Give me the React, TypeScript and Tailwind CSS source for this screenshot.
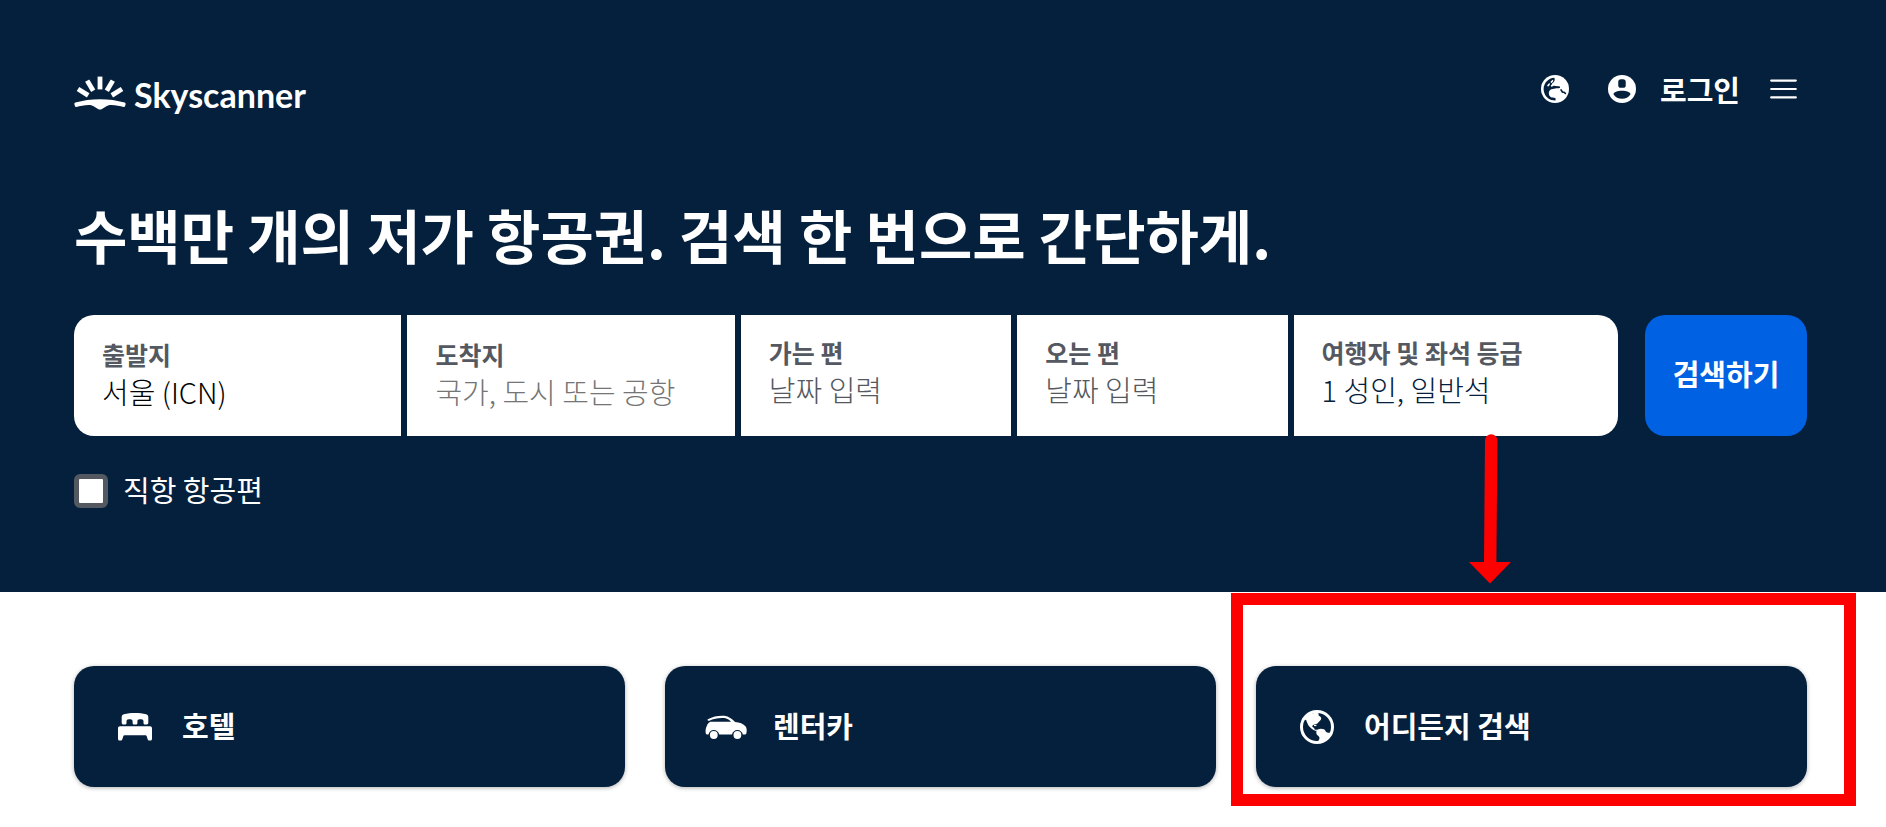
import React, { useState } from "react";

const NAVY = "#05203c";

function LogoMark() {
  return (
    <svg viewBox="0 0 52 34" className="h-[34px] w-[52px]" fill="none" aria-hidden="true">
      <g stroke="#fff" strokeWidth="4.8" strokeLinecap="butt" strokeLinejoin="round">
        <path d="M26 .6V13.4" />
        <path d="M13.2 4.6 19.2 14.8" />
        <path d="M38.8 4.6 32.8 14.8" />
        <path d="M4 13 14.2 19.4" />
        <path d="M48 13 37.8 19.4" />
      </g>
      <path
        fill="#fff"
        d="M1.4 26.6C9 24.400 17 23.200 26 23.200s17 1.200 24.600 3.400c.8.2 1.200 1 1 1.700l-.5 1.800c-.2.700-.8 1-1.500.8-3.600-1-7.600-1.800-12.400-2-2.400 0-3.800.6-5.600 1.800l-3.600 2.200c-1.300.800-2.700.800-4 0l-3.600-2.200c-1.800-1.200-3.200-1.800-5.600-1.800-4.800.2-8.800 1-12.400 2-.7.2-1.300-.1-1.500-.8l-.5-1.800c-.2-.7.2-1.500 1-1.700Z"
      />
    </svg>
  );
}

function GlobeEast() {
  return (
    <svg viewBox="0 0 27 27" className="size-7" aria-hidden="true">
      <circle cx="13.500" cy="13.500" r="13.500" fill="#fff" />
      <path
        fill={NAVY}
        d="M12.800 2.600C7 3 2.800 7.600 2.500 13.200c0 4.900 2.800 9.200 7.500 10.900l3.800.5c.6-.9.500-2-.2-2.500-1.200-.6-3 .1-4.300-.9-1.900-1.400-2.200-4-1.300-5.700.9-1.600 2.900-2.300 4.700-2.300.900 0 1.500-.4 2.700-.4 1.300 0 2.500.2 3-.7.200-.9-.7-1.200-1.600-1.300l-3.200-.1c-.5-.6-1.300-.4-1.900 0-1.100.7-2 .7-2.200 0-.1-1.100 1.300-1.400 1.300-2.400.1-.7.6-.8 1.300-1.400 1.100-1 1.500-2.800.7-4.300Z"
      />
      <path fill="#fff" d="M9.300 6.300 11.300 4.500l.6.900-.8 1.600-1.600.9ZM6.900 8.600l1.700-.8-.2 1.800-1.300 1.600-1.300-.5Z" />
      <path stroke={NAVY} strokeWidth="1.600" fill="none" d="M19 13.800 20.600 16.400l2 .5 1.300 1.400" />
    </svg>
  );
}

function AccountIcon() {
  return (
    <svg viewBox="0 0 27 27" className="size-7" aria-hidden="true">
      <circle cx="13.500" cy="13.500" r="13.500" fill="#fff" />
      <rect x="9.900" y="4.200" width="7.200" height="8.200" rx="2.600" fill={NAVY} />
      <path fill={NAVY} d="M5.300 18.500c0-2.200 4-3.400 8.200-3.400s8.200 1.200 8.200 3.400c-1.700 2.900-4.700 4.500-8.200 4.500s-6.500-1.600-8.200-4.500Z" />
    </svg>
  );
}

function MenuIcon() {
  return (
    <svg viewBox="0 0 27 20" className="h-5 w-[27px]" stroke="#fff" strokeWidth="2.200" strokeLinecap="round" aria-hidden="true">
      <path d="M1.200 1.600h24.600M1.200 10h24.600M1.200 18.400h24.600" />
    </svg>
  );
}

function BedIcon() {
  return (
    <svg viewBox="0 0 36 30" className="h-[30px] w-9" fill="#fff" aria-hidden="true">
      <path d="M4.700 5.200C4.700 3.600 5.400 2.800 6.800 2.300 13.500.7 22.500.7 29.200 2.300c1.400.5 2.100 1.300 2.100 2.900v5.600c0 1.100-.7 1.800-1.800 1.800h-1.300c-1 0-1.700-.6-1.700-1.600V9.400c0-1.500-.8-2.200-2.300-2.200h-1.500c-1.500 0-2.300.7-2.300 2.200V11c0 1-.6 1.600-1.600 1.600h-1.600c-1 0-1.600-.6-1.600-1.600V9.400c0-1.500-.8-2.200-2.300-2.200h-1.500c-1.500 0-2.300.7-2.300 2.200V11c0 1-.7 1.600-1.700 1.600H6.500c-1.100 0-1.800-.7-1.800-1.800Z" />
      <path d="M3 14.300h30c1.200 0 2 .8 2 2v10.400c0 1.200-.7 1.900-1.800 1.900h-.8c-1 0-1.500-.5-1.800-1.500l-.9-2.900c-.2-.6-.6-.9-1.200-.9H7.500c-.6 0-1 .3-1.200.9l-.9 2.900c-.3 1-.8 1.500-1.800 1.500h-.8c-1.100 0-1.800-.7-1.800-1.900V16.300c0-1.200.8-2 2-2Z" />
    </svg>
  );
}

function CarIcon() {
  return (
    <svg viewBox="0 0 42 24" className="h-6 w-[42px]" fill="#fff" aria-hidden="true">
      <path d="M2.800 4.200C8.500 1.200 14.200.3 19.500.8c4.300.4 7.600 3.300 10.600 6.200 4.300.4 8.400 1.600 10.600 4.600 1.200 2 1.200 4.600.7 6.600-.2.900-.8 1.400-1.700 1.400h-1.900c-.4-2.600-2.600-4.700-5.400-4.700S27.400 17 27 19.600H14.200c-.4-2.600-2.600-4.700-5.400-4.700-2.600 0-4.800 1.900-5.300 4.500H2c-.7-.1-1.200-.5-1.300-1.300-.4-3.300.1-5.300 1.300-7.700.7-1.500 1.700-2.700 3.300-3.600H26c-1.900-2-3.900-3.500-6.700-3.700C14 2.700 9 3.500 4.300 5.700c-1.300.6-2.200-.9-1.500-1.500Z" />
      <circle cx="8.800" cy="20" r="3.900" />
      <circle cx="32.400" cy="20" r="3.900" />
    </svg>
  );
}

function GlobeAmericas() {
  return (
    <svg viewBox="0 0 34 34" className="size-[34px]" aria-hidden="true">
      <circle cx="17" cy="17" r="15.500" fill="none" stroke="#fff" strokeWidth="3" />
      <path
        fill="#fff"
        d="M4 9.500C7 4.600 12.500 2.300 18.600 3.300c.1 1.300-.4 2 .7 2.800 1.300.6 2.200 1.600 1.800 3.200-.8 1.500-2.200 2.700-3.700 4.200-1.400 1.100-3 .6-4.300 1.500-1 .9-1.300 2 .3 2.500 1.200.3.700 1.700 1.600 2.200.9.300 1.600-.3 2.500.4-.6 1.200-2.400 1-3.900 0-2.200-1.500-4-2.900-5.400-5.100C7 12.600 6.600 11.200 6.200 10Z"
      />
      <path
        fill="#fff"
        d="M17.600 19.400c2-1 5-1 6.800.1 1.200.9 1 2.600 2.800 3.100 1.600.3 3.300.2 4.300.9-2 5-6.200 8.200-13 8.900-.9-1.400 1.500-3.300.9-5-.6-1.400-2.600-2-3-3.800-.3-1.700 0-3.300 1.200-4.200Z"
      />
      <path fill="#fff" d="M14 14.800h2.400v1.300H14Z" />
    </svg>
  );
}

function Arrow() {
  return (
    <svg
      viewBox="0 0 42 150"
      className="pointer-events-none absolute top-full right-[107px] z-10 -mt-0.5 h-[150px] w-[42px]"
      fill="#f00"
      aria-hidden="true"
    >
      <path d="M16 6.500a6.200 6.200 0 0 1 12.400 0L27.400 128H42L21 149.500 0 128H15Z" />
    </svg>
  );
}

const LABEL = "block text-[25px] leading-9 font-bold whitespace-nowrap text-[#545860]";
const VALUE = "block w-full text-[29px] leading-[38px] font-light whitespace-nowrap";

type TextFieldProps = { id: string; label: string; initial: string; placeholder: string; className?: string };

function TextField({ id, label, initial, placeholder, className = "" }: TextFieldProps) {
  const [value, setValue] = useState(initial);
  return (
    <div className={`min-w-0 bg-white px-7 pt-[21px] pb-[26px] ${className}`}>
      <label htmlFor={id} className={LABEL}>
        {label}
      </label>
      <input
        id={id}
        type="text"
        value={value}
        placeholder={placeholder}
        onChange={(e) => setValue(e.target.value)}
        className={`${VALUE} bg-transparent text-black outline-none placeholder:text-[#757575]`}
      />
    </div>
  );
}

type PickerFieldProps = { label: string; value: string; tone: string; className?: string };

function PickerField({ label, value, tone, className = "" }: PickerFieldProps) {
  return (
    <button type="button" className={`w-full min-w-0 bg-white px-7 pt-[19px] pb-7 text-left ${className}`}>
      <span className={LABEL}>{label}</span>
      <span className={`${VALUE} ${tone}`}>{value}</span>
    </button>
  );
}

type ProductLinkProps = { icon: React.ReactNode; label: string };

function ProductLink({ icon, label }: ProductLinkProps) {
  return (
    <a
      href="#"
      className="flex h-[121px] items-center rounded-[20px] bg-[#05203c] pl-[38px] text-[29px] leading-[42px] font-bold text-white shadow-[0_1px_4px_rgba(37,32,31,0.35)]"
    >
      <span className="mr-6 flex w-[46px] shrink-0 items-center justify-center">{icon}</span>
      <span className="pb-1">{label}</span>
    </a>
  );
}

export default function App() {
  const [direct, setDirect] = useState(false);
  return (
    <div className="min-h-screen overflow-x-hidden bg-white font-['Noto_Sans_CJK_KR',sans-serif]">
      <div className="bg-[#05203c] pr-[79px] pb-20 pl-[74px] text-white">
        <header className="flex items-start justify-between pt-[66px]">
          <a href="#" className="flex h-[54px] items-center gap-2">
            <LogoMark />
            <span className="pt-1 font-['Lato',sans-serif] text-[34px] leading-[50px] font-bold">Skyscanner</span>
          </a>
          <nav className="mr-[10px] flex h-[46px] items-center">
            <button type="button" aria-label="지역 설정" className="mr-[39px]">
              <GlobeEast />
            </button>
            <button type="button" className="mr-[30px] flex items-center gap-6 text-[29px] leading-[46px] font-bold">
              <AccountIcon />
              로그인
            </button>
            <button type="button" aria-label="메뉴">
              <MenuIcon />
            </button>
          </nav>
        </header>

        <main>
          <h1 className="mt-[74px] text-[58px] leading-[80px] font-bold">
            수백만 개의 저가 항공권. 검색 한 번으로 간단하게.
          </h1>
          <form className="mt-[41px]" onSubmit={(e) => e.preventDefault()}>
            <div className="flex gap-[27px]">
              <div className="grid min-w-0 flex-1 grid-cols-[327fr_327fr_270fr_270fr_324fr] gap-1.5">
                <TextField id="origin" label="출발지" initial="서울 (ICN)" placeholder="" className="rounded-l-[20px]" />
                <TextField id="destination" label="도착지" initial="" placeholder="국가, 도시 또는 공항" />
                <PickerField label="가는 편" value="날짜 입력" tone="text-[#545860]" />
                <PickerField label="오는 편" value="날짜 입력" tone="text-[#545860]" />
                <div className="relative min-w-0">
                  <PickerField
                    label="여행자 및 좌석 등급"
                    value="1 성인, 일반석"
                    tone="text-[#05203c]"
                    className="rounded-r-[20px]"
                  />
                  <Arrow />
                </div>
              </div>
              <button
                type="submit"
                className="w-[162px] shrink-0 rounded-[20px] bg-[#0062e3] pb-1.5 text-[29px] leading-[42px] font-bold"
              >
                검색하기
              </button>
            </div>
            <div className="mt-[34px] flex items-center gap-[15px]">
              <input
                id="direct"
                type="checkbox"
                checked={direct}
                onChange={(e) => setDirect(e.target.checked)}
                className="size-[34px] appearance-none rounded-md border-[5px] border-[#545860] bg-white checked:bg-[#0062e3]"
              />
              <label htmlFor="direct" className="pb-1 text-[29px] leading-[38px]">
                직항 항공편
              </label>
            </div>
          </form>
        </main>
      </div>

      <section className="grid grid-cols-3 gap-10 pt-[74px] pr-[79px] pb-10 pl-[74px]">
        <ProductLink icon={<BedIcon />} label="호텔" />
        <ProductLink icon={<CarIcon />} label="렌터카" />
        <div className="relative">
          <ProductLink icon={<GlobeAmericas />} label="어디든지 검색" />
          <div className="pointer-events-none absolute -top-[73px] -right-[49px] -bottom-[19px] -left-[25px] border-[12px] border-[#f00]" />
        </div>
      </section>
    </div>
  );
}
